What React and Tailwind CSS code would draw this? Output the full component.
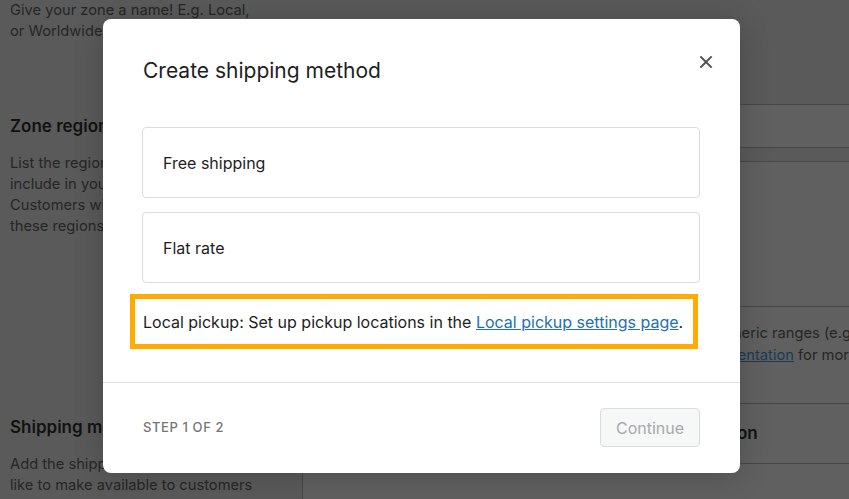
import React from "react";

const CloseIcon = () => (
  <svg viewBox="0 0 24 24" width="32" height="32" fill="#555">
    <path d="M12 13.06l3.712 3.713 1.061-1.06L13.061 12l3.712-3.712-1.06-1.06L12 10.938 8.288 7.227l-1.061 1.06L10.939 12l-3.712 3.712 1.06 1.061L12 13.061z" />
  </svg>
);

const MethodOption = ({ label }) => (
  <div className="h-[71px] border border-[#dcdcde] rounded-[4px] flex items-center pl-[20px] text-[16px] text-[#1e1e1e]">
    {label}
  </div>
);

const App = () => {
  return (
    <div className="relative w-[849px] h-[499px] overflow-hidden bg-[#5a5a5a] font-[Inter,sans-serif]">
      {/* page behind the overlay */}
      <div className="flex h-full">
        <div className="w-[302px] shrink-0 pl-[10px] text-[14.7px] leading-[21px] text-[#262626]">
          <p>
            Give your zone a name! E.g. Local,
            <br />
            or Worldwide.
          </p>
          <h2 className="mt-[72px] text-[17px] leading-[24px] font-semibold text-[#121212]">
            Zone regions
          </h2>
          <p className="mt-[15px]">
            List the regions you'd like to
            <br />
            include in your shipping zone.
            <br />
            Customers will be matched against
            <br />
            these regions.
          </p>
          <h2 className="mt-[178px] text-[17px] leading-[24px] font-semibold text-[#121212]">
            Shipping methods
          </h2>
          <p className="mt-[15px]">
            Add the shipping methods you'd
            <br />
            like to make available to customers
          </p>
        </div>

        <div className="flex-1 flex flex-col text-[#262626]">
          <div className="h-[104px]" />
          <div className="h-[44px] bg-[#606060] border-y border-l border-[#474747]" />
          <div className="h-[13px]" />
          <div className="flex-1 bg-[#606060] border-t border-l border-[#474747] flex flex-col">
            <div className="h-[145px] border-b border-[#474747]" />
            <div className="h-[97px] border-b border-[#474747] pt-[15px] text-[14.7px] leading-[22px] whitespace-nowrap pl-[34px]">
              <p className="ml-[7px]">
                Postcodes containing wildcards (e.g. CB23*) or fully numeric ranges (e.g. 90210...99999)
              </p>
              <p>
                are also supported. Please see the shipping zones{" "}
                <span className="underline text-[#1c3a55]">documentation</span> for more information.
              </p>
            </div>
            <div className="h-[60px] border-b border-[#474747] flex items-center pl-[24px] text-[17px] font-semibold text-[#121212]">
              <span className="w-[200px]">Title</span>
              <span className="w-[136px]">Enabled</span>
              <span>Description</span>
            </div>
          </div>
        </div>
      </div>

      {/* modal */}
      <div className="absolute inset-0 pl-[103px] pt-[19px]">
        <div className="relative w-[637px] bg-white rounded-[8px] shadow-[0_3px_30px_rgba(0,0,0,0.2)] flex flex-col">
          <button className="absolute top-[27px] right-[18px]">
            <CloseIcon />
          </button>

          <div className="pt-[38px] pl-[40px]">
            <h1 className="text-[21px] leading-[28px] text-[#1e1e1e]">Create shipping method</h1>
          </div>

          <div className="mt-[42px] pl-[39px] pr-[40px] pb-[33px] flex flex-col">
            <MethodOption label="Free shipping" />
            <div className="mt-[14px]">
              <MethodOption label="Flat rate" />
            </div>
            <div className="mt-[11px] ml-[-12px] mr-[2px] h-[55px] border-[5px] border-[#ffab00] flex items-center pl-[8px] text-[16px] text-[#1e1e1e]">
              <p>
                Local pickup: Set up pickup locations in the{" "}
                <a href="#" className="text-[#2271b1] underline">
                  Local pickup settings page
                </a>
                .
              </p>
            </div>
          </div>

          <div className="border-t border-[#e0e0e0] px-[40px] pt-[25px] pb-[26px] flex items-center justify-between">
            <span className="text-[13px] font-medium uppercase tracking-[0.6px] text-[#757575]">
              Step 1 of 2
            </span>
            <button className="w-[100px] h-[39px] rounded-[4px] border border-[#dcdcde] bg-[#f6f7f7] text-[16px] text-[#a7aaad]">
              Continue
            </button>
          </div>
        </div>
      </div>
    </div>
  );
};

export default App;
